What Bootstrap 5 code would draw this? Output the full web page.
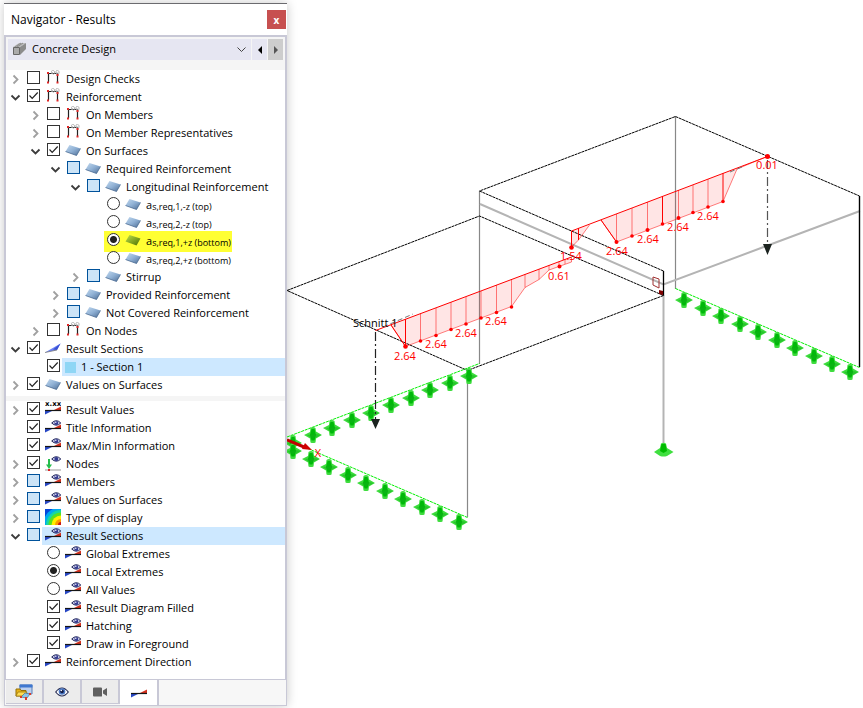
<!DOCTYPE html>
<html lang="en">
<head>
<meta charset="utf-8">
<meta name="viewport" content="width=device-width, initial-scale=1">
<title>Navigator - Results</title>
<link rel="stylesheet" href="https://cdn.jsdelivr.net/npm/bootstrap@5.3.0/dist/css/bootstrap.min.css">
<style>
body{font-family:"Open Sans","Noto Sans",sans-serif;font-size:11px;line-height:18px;color:#000;background:#fff}
.workspace{min-height:100vh}
.navigator{width:287px;padding:3px 0 3px 4px}
.shell{background:#fff;box-shadow:0 0 10px rgba(0,0,0,.22);border-top:1px solid #6b6b6f}
.titlebar{height:31px;padding:0 1px 0 7px;font-size:12px}
.close-btn{width:19px;height:19px;background:#c75050;color:#fff;font-size:10px;font-weight:700;line-height:16px;border:0;padding:0}
.content{border:2px solid #c8c8d6;border-bottom:0;flex:1 1 auto}
.toolbar{background:#f5f5f5;padding:2px 2px 10px 2px;gap:1px}
.picker{position:relative;background:#e6e6f2;height:21px}
.picker select{appearance:none;border:0;background:transparent;width:100%;height:21px;padding:0 20px 2px 24px;font-size:11px;color:#000}
.picker svg{position:absolute;top:3px;pointer-events:none}
.picker .cube{left:4px}
.picker .drop{right:4px}
.step{border:0;padding:0;width:15px;height:21px;background:#e6e6f2;display:flex;align-items:center;justify-content:center}
.step.off{background:#cdcdcd}
.tree{list-style:none;margin:0;padding:0}
.tree li{display:flex;align-items:center;height:18px;padding-left:4px}
.tree .d1{padding-left:24px}.tree .d2{padding-left:44px}.tree .d3{padding-left:64px}.tree .d4{padding-left:84px}
.twist{width:11px;height:18px;border:0;padding:0;background:none;flex:none;display:flex;align-items:center;justify-content:center;margin-right:6px}
.tree input{appearance:none;margin:0 0 3px;width:13px;height:13px;border:1px solid #333;background:#fff center/11px 11px no-repeat;flex:none}
.tree input[type=checkbox]:checked{background-image:url("data:image/svg+xml,%3Csvg xmlns='http://www.w3.org/2000/svg' viewBox='0 0 11 11'%3E%3Cpath d='M1.5 5.5l2.7 2.8L9.7 2.5' fill='none' stroke='%23222' stroke-width='1.2'/%3E%3C/svg%3E")}
.tree input.part{background-color:#cce4f7;border-color:#00529b}
.tree input[type=radio]{border-radius:50%}
.tree input[type=radio]:checked{background-image:radial-gradient(circle,#222 3px,transparent 4px)}
.tree label{display:flex;align-items:center;height:18px;padding-left:5px;white-space:nowrap;flex:1 1 auto}
.tree label svg{margin:0 5px 2px 0;flex:none}
.tree label span{line-height:18px}
.tree sub{font-size:9px;bottom:-1px;vertical-align:baseline;line-height:1}
.tree .picked{background:#cde8ff;margin-left:2px;padding-left:3px}
.tree .marked{flex:0 0 auto;padding-right:1px}
.tree .markrow{padding-left:84px}
.tree .markrow .twist{width:14px;margin-right:0}
.markbox{background:#ff3;height:21px;padding-left:3px;display:flex;align-items:center}
.swatch{width:11px;height:11px;background:#8fd6f5;margin-right:5px}
.divider{height:5px;background:#f5f5f5;margin:2px 0 0}
.spare{height:8px}
.view-tabs{border:1px solid #c8c8d6;background:#f7f7f7;height:27px;margin:0;padding-left:1px}
.view-tabs button{width:38px;height:24px;padding:0;border:0;border-right:2px solid #c8c8d6;border-bottom:1px solid #c8c8d6;background:#ececec;display:flex;align-items:center;justify-content:center}
.view-tabs button.current{background:#fff;width:39px;height:25px;border-bottom:0}
.scene{min-width:0;overflow:hidden}
.scene svg{display:block;width:100%;height:auto}
.scene text{font-size:11px;font-family:"Open Sans","Noto Sans",sans-serif}
.tiny{font:bold 7px "DejaVu Sans",sans-serif}
</style>
</head>
<body>
<svg width="0" height="0" class="position-absolute" aria-hidden="true">
<defs>
<linearGradient id="gs" x1="0" y1="0" x2="1" y2="1"><stop offset="0" stop-color="#c3daf0"/><stop offset=".5" stop-color="#8fb0d4"/><stop offset="1" stop-color="#4c6c94"/></linearGradient>
<linearGradient id="gg" x1="0" y1="0" x2="1" y2="1"><stop offset="0" stop-color="#bfe04a"/><stop offset="1" stop-color="#4c7000"/></linearGradient>
<symbol id="right" viewBox="0 0 11 11"><path d="M3.5 1.5l4 4-4 4" fill="none" stroke="#a0a0a0" stroke-width="1.8"/></symbol>
<symbol id="down" viewBox="0 0 11 11"><path d="M1.5 3.5l4 4 4-4" fill="none" stroke="#3c3c3c" stroke-width="1.8"/></symbol>
<symbol id="frame" viewBox="0 0 16 16"><path d="M3.500 12V3.500M12.500 12V3.500M3.500 3.500h9" fill="none" stroke="#222" stroke-width="1.200"/><path d="M7 4c-2-4 2-5 2.500-2s-3 3-2 0M11.500 4c-2-4 2-5 2.500-2s-3 3-2 0" fill="none" stroke="#aaa" stroke-width=".9"/><path d="M2 2h2v2H2zM2 11.500h2v2H2zM11.500 11.500h2v2h-2zM11.500 4h2v2h-2z" fill="#e02828"/></symbol>
<symbol id="surf" viewBox="0 0 16 16"><path d="M4.500 3L15.500 6.500 11.500 13.500 0.500 9.500z" fill="url(#gs)"/><path d="M.5 9.500l11 4 4-7" fill="none" stroke="#496a92" stroke-width=".8"/></symbol>
<symbol id="surfg" viewBox="0 0 16 16"><path d="M4.500 3L15.500 6.500 11.500 13.500 0.500 9.500z" fill="url(#gg)"/></symbol>
<symbol id="blade" viewBox="0 0 16 16"><path d="M0 12.500L15.500 3.500 12 10z" fill="#6b83f5"/><path d="M15.500 3.500L12 10 8 9.500z" fill="#3a50d5"/><path d="M0 12.500l12-2.500" stroke="#777" stroke-width=".8"/></symbol>
<symbol id="wedge" viewBox="0 0 16 16"><path d="M0 8.500h8L0 12.500z" fill="#2747c5"/><path d="M8 8.500L16 4.500v4z" fill="#d3301d"/><path d="M0 8.500h16" stroke="#151515" stroke-width="1.200"/></symbol>
<symbol id="weye" viewBox="0 0 16 16"><use href="#wedge" y="1" width="16" height="16"/><path d="M6.700 4Q11.300-.6 15.800 4 11.300 8.400 6.700 4z" fill="#d6d8f0" stroke="#1f2459" stroke-width="1"/><circle cx="11.300" cy="3.900" r="2" fill="#343b93"/><circle cx="10.800" cy="3.300" r=".7" fill="#fff"/></symbol>
<symbol id="xxx" viewBox="0 0 16 16"><use href="#wedge" y="1" width="16" height="16"/><text x="0" y="5" class="tiny">x.xx</text></symbol>
<symbol id="node" viewBox="0 0 16 16"><path d="M0 15h16" stroke="#999"/><path d="M4 4v7" stroke="#25bd4d" stroke-width="2"/><path d="M1 9.500h6L4 14z" fill="#25bd4d"/><path d="M3 14h2v2H3z" fill="#d22"/><path d="M6.700 4Q11.300-.6 15.800 4 11.300 8.400 6.700 4z" fill="#d6d8f0" stroke="#1f2459" stroke-width="1"/><circle cx="11.300" cy="3.900" r="2" fill="#343b93"/></symbol>
<symbol id="rainbow" viewBox="0 0 16 16"><path fill="#0646db" d="M0 0h16v16H0z"/><circle cx="16" cy="16" r="18" fill="#00a9f0"/><circle cx="16" cy="16" r="15" fill="#16d7a5"/><circle cx="16" cy="16" r="12.500" fill="#58e11f"/><circle cx="16" cy="16" r="9.500" fill="#fff000"/><circle cx="16" cy="16" r="6" fill="#ff9a00"/><circle cx="16" cy="16" r="3" fill="#c81818"/></symbol>
</defs>
</svg>

<main class="workspace d-flex align-items-start">
<aside class="navigator flex-shrink-0">
<div class="shell d-flex flex-column">
<header class="titlebar d-flex align-items-center justify-content-between">
<span>Navigator - Results</span><button class="close-btn" aria-label="Close">x</button>
</header>
<div class="content">
<div class="toolbar d-flex">
<div class="picker flex-grow-1">
<svg class="cube" width="15" height="15" viewBox="0 0 15 15"><path d="M1 5L7 1h7L8 5z" fill="#bbb"/><path d="M8 5l6-4v6l-6 6z" fill="#8c8c8c"/><path d="M1.500 5.500h6v7h-6z" fill="#aaa" stroke="#666"/><path d="M3 5l6-4M5 5l6-4" stroke="#777" stroke-width=".7"/></svg>
<select aria-label="Design add-on"><option>Concrete Design</option></select>
<svg class="drop" width="11" height="15" viewBox="0 0 11 15"><path d="M1.500 5.500l4 4 4-4" fill="none" stroke="#444"/></svg>
</div>
<button class="step" aria-label="Previous"><svg width="6" height="8"><path d="M5 0v8L1 4z" fill="#000"/></svg></button>
<button class="step off" aria-label="Next"><svg width="6" height="8"><path d="M1 0v8l4-4z" fill="#555"/></svg></button>
</div>
<ul class="tree" id="results">
<li><button class="twist" aria-label="Expand"><svg width="11" height="11"><use href="#right"/></svg></button><input type="checkbox" id="a1"><label for="a1"><svg width="16" height="16"><use href="#frame"/></svg><span>Design Checks</span></label></li>
<li><button class="twist" aria-label="Collapse"><svg width="11" height="11"><use href="#down"/></svg></button><input type="checkbox" id="a2" checked><label for="a2"><svg width="16" height="16"><use href="#frame"/></svg><span>Reinforcement</span></label></li>
<li class="d1"><button class="twist" aria-label="Expand"><svg width="11" height="11"><use href="#right"/></svg></button><input type="checkbox" id="a3"><label for="a3"><svg width="16" height="16"><use href="#frame"/></svg><span>On Members</span></label></li>
<li class="d1"><button class="twist" aria-label="Expand"><svg width="11" height="11"><use href="#right"/></svg></button><input type="checkbox" id="a4"><label for="a4"><svg width="16" height="16"><use href="#frame"/></svg><span>On Member Representatives</span></label></li>
<li class="d1"><button class="twist" aria-label="Collapse"><svg width="11" height="11"><use href="#down"/></svg></button><input type="checkbox" id="a5" checked><label for="a5"><svg width="16" height="16"><use href="#surf"/></svg><span>On Surfaces</span></label></li>
<li class="d2"><button class="twist" aria-label="Collapse"><svg width="11" height="11"><use href="#down"/></svg></button><input type="checkbox" class="part" id="a6"><label for="a6"><svg width="16" height="16"><use href="#surf"/></svg><span>Required Reinforcement</span></label></li>
<li class="d3"><button class="twist" aria-label="Collapse"><svg width="11" height="11"><use href="#down"/></svg></button><input type="checkbox" class="part" id="a7"><label for="a7"><svg width="16" height="16"><use href="#surf"/></svg><span>Longitudinal Reinforcement</span></label></li>
<li class="d4"><span class="twist"></span><input type="radio" name="as" id="a8"><label for="a8"><svg width="16" height="16"><use href="#surf"/></svg><span>a<sub>s,req,1,-z (top)</sub></span></label></li>
<li class="d4"><span class="twist"></span><input type="radio" name="as" id="a9"><label for="a9"><svg width="16" height="16"><use href="#surf"/></svg><span>a<sub>s,req,2,-z (top)</sub></span></label></li>
<li class="markrow"><span class="twist"></span><div class="markbox"><input type="radio" name="as" id="a10" checked><label class="marked" for="a10"><svg width="16" height="16"><use href="#surfg"/></svg><span>a<sub>s,req,1,+z (bottom)</sub></span></label></div></li>
<li class="d4"><span class="twist"></span><input type="radio" name="as" id="a11"><label for="a11"><svg width="16" height="16"><use href="#surf"/></svg><span>a<sub>s,req,2,+z (bottom)</sub></span></label></li>
<li class="d3"><button class="twist" aria-label="Expand"><svg width="11" height="11"><use href="#right"/></svg></button><input type="checkbox" class="part" id="a12"><label for="a12"><svg width="16" height="16"><use href="#surf"/></svg><span>Stirrup</span></label></li>
<li class="d2"><button class="twist" aria-label="Expand"><svg width="11" height="11"><use href="#right"/></svg></button><input type="checkbox" class="part" id="a13"><label for="a13"><svg width="16" height="16"><use href="#surf"/></svg><span>Provided Reinforcement</span></label></li>
<li class="d2"><button class="twist" aria-label="Expand"><svg width="11" height="11"><use href="#right"/></svg></button><input type="checkbox" class="part" id="a14"><label for="a14"><svg width="16" height="16"><use href="#surf"/></svg><span>Not Covered Reinforcement</span></label></li>
<li class="d1"><button class="twist" aria-label="Expand"><svg width="11" height="11"><use href="#right"/></svg></button><input type="checkbox" id="a15"><label for="a15"><svg width="16" height="16"><use href="#frame"/></svg><span>On Nodes</span></label></li>
<li><button class="twist" aria-label="Collapse"><svg width="11" height="11"><use href="#down"/></svg></button><input type="checkbox" id="a16" checked><label for="a16"><svg width="16" height="16"><use href="#blade"/></svg><span>Result Sections</span></label></li>
<li class="d1"><span class="twist"></span><input type="checkbox" id="a17" checked><label class="picked" for="a17"><i class="swatch"></i><span>1 - Section 1</span></label></li>
<li><button class="twist" aria-label="Expand"><svg width="11" height="11"><use href="#right"/></svg></button><input type="checkbox" id="a18" checked><label for="a18"><svg width="16" height="16"><use href="#surf"/></svg><span>Values on Surfaces</span></label></li>
</ul>
<div class="divider"></div>
<ul class="tree" id="display">
<li><button class="twist" aria-label="Expand"><svg width="11" height="11"><use href="#right"/></svg></button><input type="checkbox" id="b1" checked><label for="b1"><svg width="16" height="16"><use href="#xxx"/></svg><span>Result Values</span></label></li>
<li><span class="twist"></span><input type="checkbox" id="b2" checked><label for="b2"><svg width="16" height="16"><use href="#weye"/></svg><span>Title Information</span></label></li>
<li><span class="twist"></span><input type="checkbox" id="b3" checked><label for="b3"><svg width="16" height="16"><use href="#weye"/></svg><span>Max/Min Information</span></label></li>
<li><button class="twist" aria-label="Expand"><svg width="11" height="11"><use href="#right"/></svg></button><input type="checkbox" id="b4" checked><label for="b4"><svg width="16" height="16"><use href="#node"/></svg><span>Nodes</span></label></li>
<li><button class="twist" aria-label="Expand"><svg width="11" height="11"><use href="#right"/></svg></button><input type="checkbox" class="part" id="b5"><label for="b5"><svg width="16" height="16"><use href="#weye"/></svg><span>Members</span></label></li>
<li><button class="twist" aria-label="Expand"><svg width="11" height="11"><use href="#right"/></svg></button><input type="checkbox" class="part" id="b6"><label for="b6"><svg width="16" height="16"><use href="#weye"/></svg><span>Values on Surfaces</span></label></li>
<li><button class="twist" aria-label="Expand"><svg width="11" height="11"><use href="#right"/></svg></button><input type="checkbox" class="part" id="b7"><label for="b7"><svg width="16" height="16"><use href="#rainbow"/></svg><span>Type of display</span></label></li>
<li><button class="twist" aria-label="Collapse"><svg width="11" height="11"><use href="#down"/></svg></button><input type="checkbox" class="part" id="b8"><label class="picked" for="b8"><svg width="16" height="16"><use href="#weye"/></svg><span>Result Sections</span></label></li>
<li class="d1"><span class="twist"></span><input type="radio" name="ext" id="b9"><label for="b9"><svg width="16" height="16"><use href="#weye"/></svg><span>Global Extremes</span></label></li>
<li class="d1"><span class="twist"></span><input type="radio" name="ext" id="b10" checked><label for="b10"><svg width="16" height="16"><use href="#weye"/></svg><span>Local Extremes</span></label></li>
<li class="d1"><span class="twist"></span><input type="radio" name="ext" id="b11"><label for="b11"><svg width="16" height="16"><use href="#weye"/></svg><span>All Values</span></label></li>
<li class="d1"><span class="twist"></span><input type="checkbox" id="b12" checked><label for="b12"><svg width="16" height="16"><use href="#weye"/></svg><span>Result Diagram Filled</span></label></li>
<li class="d1"><span class="twist"></span><input type="checkbox" id="b13" checked><label for="b13"><svg width="16" height="16"><use href="#weye"/></svg><span>Hatching</span></label></li>
<li class="d1"><span class="twist"></span><input type="checkbox" id="b14" checked><label for="b14"><svg width="16" height="16"><use href="#weye"/></svg><span>Draw in Foreground</span></label></li>
<li><button class="twist" aria-label="Expand"><svg width="11" height="11"><use href="#right"/></svg></button><input type="checkbox" id="b15" checked><label for="b15"><svg width="16" height="16"><use href="#weye"/></svg><span>Reinforcement Direction</span></label></li>
</ul>
<div class="spare"></div>
</div>
<nav class="view-tabs d-flex" aria-label="Navigator views">
<button aria-label="Data"><svg width="18" height="16" viewBox="0 0 18 16"><path d="M5 1h12v9H5z" fill="#bcd0ee" stroke="#5b7fb5"/><path d="M4.500.500h13v3h-13z" fill="#3f78d0"/><path d="M1 5h4l1 1.500h5V12H1z" fill="#e7b416" stroke="#94700a"/><path d="M3 8h9l-2 4H1z" fill="#ffdc55" stroke="#94700a" stroke-width=".7"/><path d="M6 13l4-4 5 1-3 4z" fill="#8cc4e8" stroke="#3f6f95" stroke-width=".7"/><path d="M10 13h2v3h-2zM5 12h2v2H5zM14 9h2v2h-2z" fill="#dc3a25"/></svg></button>
<button aria-label="Display"><svg width="14" height="12" viewBox="0 0 14 12"><path d="M.7 6Q7-2 13.300 6 7 14 .7 6z" fill="#fff" stroke="#22274e" stroke-width="1.200"/><circle cx="7" cy="5.500" r="3.300" fill="#4a78c4"/><circle cx="7" cy="5.500" r="1.800" fill="#111a44"/><circle cx="6.300" cy="4.500" r=".8" fill="#fff"/></svg></button>
<button aria-label="Views"><svg width="14" height="10"><path d="M0 1.500Q0 .5 1 .5h7q1 0 1 1V9q0 .500-1 .500H1Q0 9.500 0 8.500zM10 3.500L14 1v8l-4-2.500z" fill="#606060"/></svg></button>
<button class="current" aria-label="Results"><svg width="16" height="16"><use href="#wedge"/></svg></button>
</nav>
</div>
</aside>

<section class="scene flex-grow-1" aria-label="Model view">
<svg viewBox="287 0 576 708" preserveAspectRatio="xMinYMin meet">
<defs>
<g id="sup"><path d="M-2.500-7Q0-9 2.500-7L3-3.500 9 0 3 3.500 2.500 7.500Q0 8.500-2.500 7.500L-3 3.500-9 0-3-3z" fill="#3edc3e"/><path d="M-1.500-6h3L3 0 1.500 5.500h-3L-3 0z" fill="#00b80a"/><path d="M-6 0L3-1 8 0 3 2.500-2 3z" fill="#12b01a" fill-opacity=".5"/></g>
</defs>
<g fill="none" stroke="#888" stroke-width="1.200"><path d="M479.500 191v173M675.500 116v173M467.500 370v147"/><path d="M663.500 295v150" stroke="#b4b4b4" stroke-width="2"/><path d="M480 204l183.500 80.500L860 211" stroke="#b4b4b4" stroke-width="2"/></g>
<g fill="none" stroke="#000" stroke-width="1"><path d="M287 290.500L479.500 216 663.500 295.500 467.500 370.500zM663.500 271L479.500 191 675.500 116.500 859.500 196" stroke-dasharray="3 .6"/>
<path d="M663.500 271v24.500" stroke-width="1.300"/><path d="M859.500 196v171" stroke-width="1.400"/></g>
<g fill="none" stroke="#00f000" stroke-width="1" stroke-dasharray="3 .8"><path d="M287 437L479.500 363.500M287 439.500L467.500 517.500M675.500 288.500L859.500 367.500"/></g>
<g>
<use href="#sup" x="469" y="376"/><use href="#sup" x="450" y="383"/><use href="#sup" x="430" y="390"/><use href="#sup" x="411" y="398"/><use href="#sup" x="391" y="405"/><use href="#sup" x="371" y="413"/><use href="#sup" x="352" y="420"/><use href="#sup" x="332" y="428"/><use href="#sup" x="313" y="435"/><use href="#sup" x="293" y="443"/>
<use href="#sup" x="293" y="451"/><use href="#sup" x="311" y="459"/><use href="#sup" x="329" y="467"/><use href="#sup" x="348" y="475"/><use href="#sup" x="366" y="483"/><use href="#sup" x="385" y="491"/><use href="#sup" x="403" y="499"/><use href="#sup" x="422" y="507"/><use href="#sup" x="440" y="514"/><use href="#sup" x="459" y="522"/>
<use href="#sup" x="684" y="300"/><use href="#sup" x="703" y="308"/><use href="#sup" x="721" y="316"/><use href="#sup" x="740" y="324"/><use href="#sup" x="758" y="332"/><use href="#sup" x="777" y="340"/><use href="#sup" x="795" y="348"/><use href="#sup" x="814" y="356"/><use href="#sup" x="832" y="364"/><use href="#sup" x="850" y="372"/>
<path d="M661 443.500q2.500-1.500 5 0l1 4.500 6.500 4-6.500 4q-3.500 1-7 0l-6-4 6-4z" fill="#3fdf3f"/><path d="M661.500 444h4l1.500 7-3.500 2-3.500-2z" fill="#0b0"/>
</g>
<g fill="#f00" fill-opacity=".1" stroke="none">
<path d="M375.500 330.500L571.500 257v5L559 266.500 549 270 539 279.500 525 287.500 511.500 306.500 405.500 346.500 391 325z"/>
<path d="M571.500 231v16l7-7 11-15z"/><path d="M601 220l15.500 22L723 201.500 737 169l30-12.500z"/>
</g>
<g fill="none" stroke="#f00" stroke-opacity=".5"><path d="M391 325l14.500 21.500L511.500 306.500 525 287.500 539 279.500 549 270 571.500 262v-5M571.500 231v16l7-7 11-15M601 220l15.500 22L723 201.500 737 169l30-12.500"/>
<path d="M420.500 313.500V341M436 308v27.500M451 302v27M466 297v27M481 291v27M496.500 285v27M511.500 279.500v27M525 274v13.500M539 269v10.500M549 265v5M559 261.500v5M565 259v5"/><path d="M616.500 214v28M632 208v28M647.500 202v28M678.500 190v28M693 185v27.500M708 179v28"/></g>
<g fill="none" stroke="#f00"><path d="M375.500 330.500L571.500 257M571.500 231L767.500 156.500"/><path d="M405.500 319v27.500M391 325l14.500 21.500M571.500 231v16M578.500 228v12M601 220l15.500 22M662.500 196v28M723 173v28.500"/></g>
<g fill="#f00"><circle cx="405.500" cy="346.500" r="2.300"/><circle cx="420.500" cy="341" r="1.800"/><circle cx="436" cy="335.500" r="1.800"/><circle cx="451" cy="329.500" r="1.800"/><circle cx="466" cy="324" r="1.800"/><circle cx="481" cy="318" r="1.800"/><circle cx="496.500" cy="312.500" r="1.800"/><circle cx="511.500" cy="307" r="1.800"/><circle cx="559.500" cy="266.500" r="2"/><circle cx="571.500" cy="247.500" r="2.300"/><circle cx="616.500" cy="242" r="2"/><circle cx="632" cy="236" r="1.800"/><circle cx="647.500" cy="230" r="2"/><circle cx="662.500" cy="224" r="1.800"/><circle cx="678.500" cy="218" r="2"/><circle cx="693" cy="212.500" r="1.800"/><circle cx="708" cy="207" r="1.800"/><circle cx="723" cy="201.500" r="1.800"/><circle cx="767.500" cy="156.500" r="2.500"/></g>
<g fill="none" stroke="#222" stroke-width="1.200"><path d="M375.500 332v88" stroke-dasharray="9 3 2 3"/><path d="M767.500 160v86" stroke="#555" stroke-dasharray="9 3 2 3"/><path d="M383 327l30-13M730 172l12-5" stroke="#777" stroke-width="1" stroke-dasharray="5 3"/></g>
<path d="M371 419h9l-4.500 10zM763 244h9l-4.500 11z" fill="#1c2420"/>
<path d="M653 277l6 2v9l-6-3z" fill="none" stroke="#a03030"/><path d="M659 290l4 1v4l-4-1z" fill="#800000"/>
<path d="M287 440l17 7" stroke="#c00000" stroke-width="3"/><path d="M305 443l7 7-10-1z" fill="#d00000"/>
<g fill="#f00" text-anchor="middle"><text x="405" y="360">2.64</text><text x="436" y="348">2.64</text><text x="466" y="337">2.64</text><text x="496" y="325">2.64</text><text x="559" y="280">0.61</text><text x="571" y="260">1.54</text><text x="617" y="255">2.64</text><text x="648" y="243">2.64</text><text x="678" y="231">2.64</text><text x="708" y="220">2.64</text><text x="767" y="169">0.01</text><text x="318" y="457">X</text></g>
<text x="353" y="327">Schnitt 1</text>
</svg>
</section>
</main>
<script src="https://cdn.jsdelivr.net/npm/bootstrap@5.3.0/dist/js/bootstrap.bundle.min.js"></script>
</body>
</html>
